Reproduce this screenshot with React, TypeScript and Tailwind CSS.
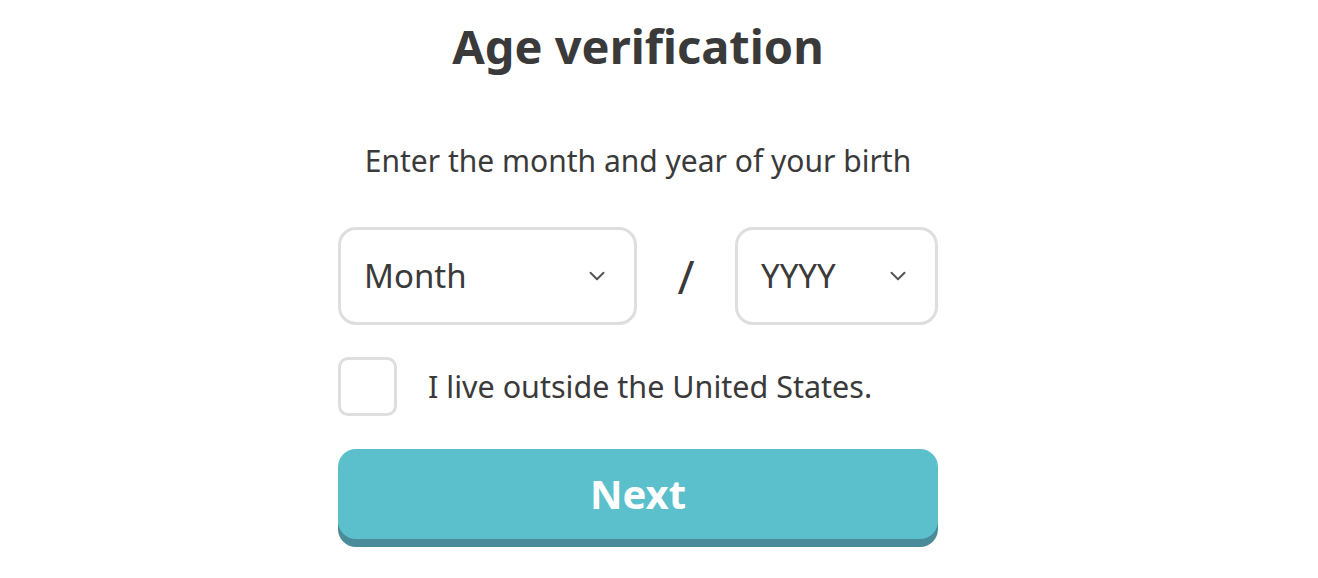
import { ChevronDown } from "lucide-react";

const font = { fontFamily: '"Noto Sans", "Open Sans", sans-serif' };

function Select({ label, width }: { label: string; width: string }) {
  return (
    <div
      className={`${width} h-[98px] flex items-center justify-between rounded-[18px] border-[3px] border-[#dedede] bg-white pl-[23px] pr-[24px]`}
    >
      <span className="text-[33px] text-[#3a3a3a]">{label}</span>
      <ChevronDown className="h-[26px] w-[26px] text-[#555]" strokeWidth={1.8} />
    </div>
  );
}

export default function App() {
  return (
    <div className="min-h-screen bg-white" style={font}>
      <div className="ml-[338px] w-[600px] flex flex-col items-center text-[#3a3a3a]">
        <h1 className="mt-[13px] text-[47px] leading-[66px] font-bold">Age verification</h1>
        <p className="mt-[62px] text-[30px] leading-[40px]">Enter the month and year of your birth</p>
        <div className="mt-[46px] w-full flex items-center justify-between">
          <Select label="Month" width="w-[299px]" />
          <span className="text-[46px]">/</span>
          <Select label="YYYY" width="w-[203px]" />
        </div>
        <label className="mt-[32px] w-full flex items-center gap-[31px]">
          <span className="h-[59px] w-[59px] rounded-[10px] border-[3px] border-[#dedede] bg-white" />
          <span className="text-[30.5px]">I live outside the United States.</span>
        </label>
        <button className="mt-[33px] w-full h-[90px] rounded-[18px] bg-[#5bc0cb] shadow-[0_8px_0_#4a8b99] text-white text-[40px] font-bold">
          Next
        </button>
      </div>
    </div>
  );
}
